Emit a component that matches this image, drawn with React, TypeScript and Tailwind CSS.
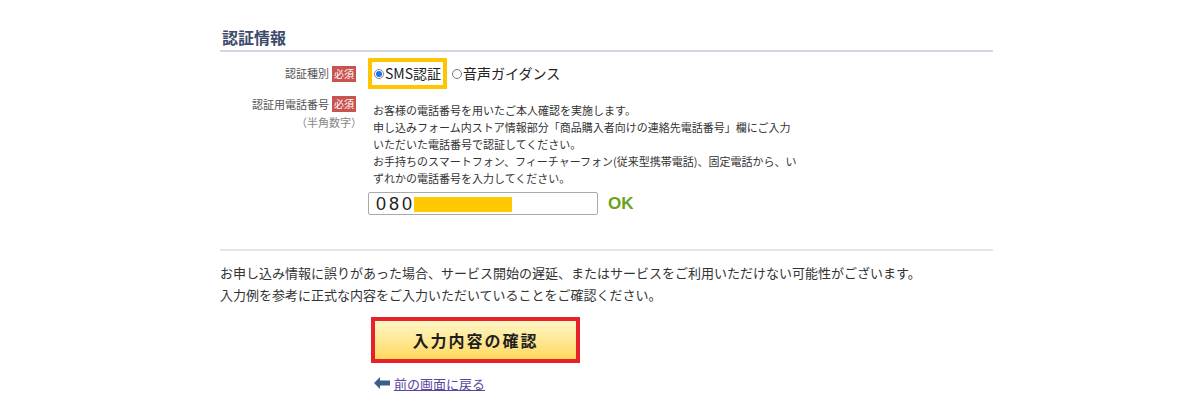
export default function App() {
  return (
    <div className="w-full h-[418px] bg-white font-['Noto_Sans_CJK_JP','Noto_Sans',sans-serif] text-[#333]">
      <div className="ml-[220px] w-[773px] pt-[26px]">
        {/* section heading */}
        <h2 className="pl-[2px] pb-[2px] text-[16px] leading-[22px] font-bold text-[#3d4a6b] border-b-2 border-[#d6d4e0]">
          認証情報
        </h2>

        {/* auth type */}
        <div className="grid grid-cols-[148px_1fr] mt-[6px]">
          <div className="flex items-center justify-end gap-[3px] pr-[12px]">
            <span className="text-[11px] text-[#555]">認証種別</span>
            <span className="bg-[#c9534f] text-white text-[10px] leading-[16px] px-[2px]">必須</span>
          </div>
          <div className="flex items-center">
            <div className="flex items-center gap-[1px] border-4 border-[#ffc600] px-[2px] h-[31px]">
              <span className="w-[10px] h-[10px] rounded-full border border-[#8a8a8a] flex items-center justify-center">
                <span className="w-[6px] h-[6px] rounded-full bg-[#1a73e8]" />
              </span>
              <span className="text-[14px] text-[#222]">SMS認証</span>
            </div>
            <div className="flex items-center gap-[1px] ml-[5px]">
              <span className="w-[10px] h-[10px] rounded-full border border-[#777]" />
              <span className="text-[14px] text-[#222]">音声ガイダンス</span>
            </div>
          </div>
        </div>

        {/* phone number */}
        <div className="grid grid-cols-[148px_1fr] mt-[7px]">
          <div className="flex flex-col items-end pr-[6px]">
            <div className="flex items-center gap-[3px] pr-[6px]">
              <span className="text-[11px] text-[#555]">認証用電話番号</span>
              <span className="bg-[#c9534f] text-white text-[10px] leading-[16px] px-[2px]">必須</span>
            </div>
            <span className="text-[11px] text-[#888] leading-[16px] mt-[1px]">（半角数字）</span>
          </div>
          <div className="pt-[6px] pl-[5px]">
            <div className="text-[11px] text-[#333] whitespace-nowrap">
              <div className="h-[17px] leading-[17px]">お客様の電話番号を用いたご本人確認を実施します。</div>
              <div className="h-[17px] leading-[17px]">申し込みフォーム内ストア情報部分「商品購入者向けの連絡先電話番号」欄にご入力</div>
              <div className="h-[17px] leading-[17px]">いただいた電話番号で認証してください。</div>
              <div className="h-[17px] leading-[17px]">お手持ちのスマートフォン、フィーチャーフォン(従来型携帯電話)、固定電話から、い</div>
              <div className="h-[17px] leading-[17px]">ずれかの電話番号を入力してください。</div>
            </div>
            <div className="flex items-center mt-[4px] -ml-[5px]">
              <div className="relative w-[230px] h-[23px] border border-[#aaa] rounded-[2px] flex items-center pl-[7px]">
                <span className="text-[18px] tracking-[3px] text-[#222] font-['Liberation_Sans',sans-serif] leading-none">080</span>
                <span className="absolute left-[45px] top-[4px] w-[98px] h-[15px] bg-[#ffc800]" />
              </div>
              <span className="ml-[10px] text-[17px] font-bold text-[#6ba321] font-['Liberation_Sans',sans-serif]">OK</span>
            </div>
          </div>
        </div>

        {/* notice */}
        <div className="mt-[32px] border-t-2 border-[#e6e6e6] pt-[11px]">
          <div className="text-[13px] text-[#333]">
            <div className="h-[22px] leading-[22px]">お申し込み情報に誤りがあった場合、サービス開始の遅延、またはサービスをご利用いただけない可能性がございます。</div>
            <div className="h-[22px] leading-[22px]">入力例を参考に正式な内容をご入力いただいていることをご確認ください。</div>
          </div>
        </div>

        {/* submit */}
        <div className="pl-[151px] mt-[11px]">
          <button className="w-[209px] h-[46px] border-4 border-[#e8202a] bg-gradient-to-b from-[#fff6c4] to-[#ffd95c] text-[16px] font-bold tracking-[2px] text-[#1e1e1e]">
            入力内容の確認
          </button>
          <a href="#" className="flex items-center gap-[4px] mt-[11px] ml-[3px] w-fit">
            <svg width="16" height="12" viewBox="0 0 16 12">
              <path d="M0 6 L6 0 L6 3.5 L16 3.5 L16 8.5 L6 8.5 L6 12 Z" fill="#3b5e8c" />
            </svg>
            <span className="text-[13px] text-[#5a46a0] underline">前の画面に戻る</span>
          </a>
        </div>
      </div>
    </div>
  );
}
